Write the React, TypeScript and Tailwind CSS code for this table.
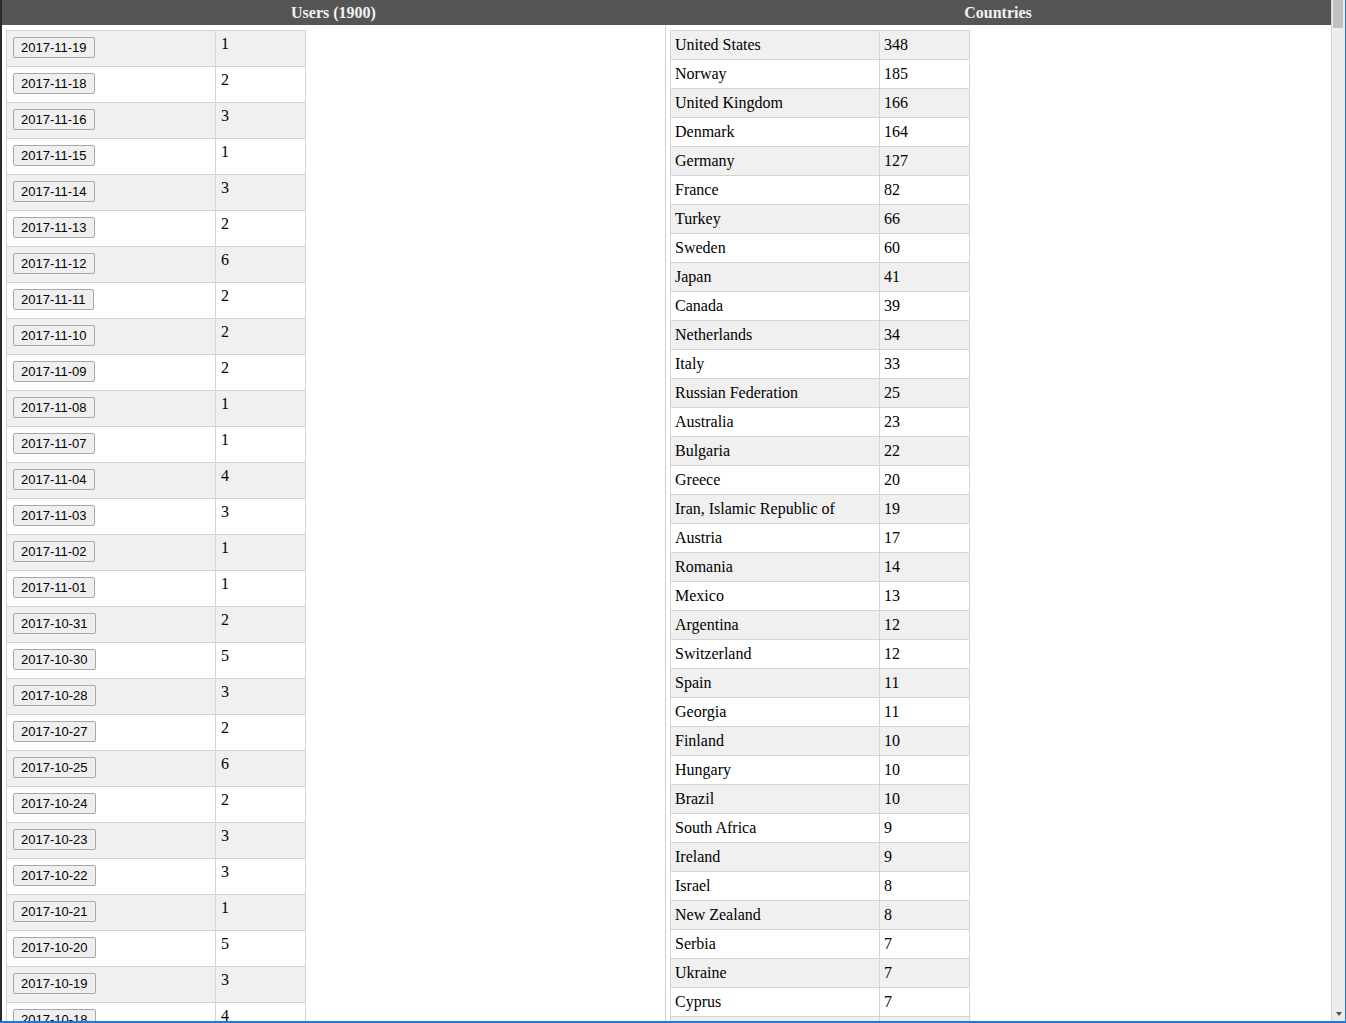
const visits: [string, number][] = [
  ['2017-11-19', 1],
  ['2017-11-18', 2],
  ['2017-11-16', 3],
  ['2017-11-15', 1],
  ['2017-11-14', 3],
  ['2017-11-13', 2],
  ['2017-11-12', 6],
  ['2017-11-11', 2],
  ['2017-11-10', 2],
  ['2017-11-09', 2],
  ['2017-11-08', 1],
  ['2017-11-07', 1],
  ['2017-11-04', 4],
  ['2017-11-03', 3],
  ['2017-11-02', 1],
  ['2017-11-01', 1],
  ['2017-10-31', 2],
  ['2017-10-30', 5],
  ['2017-10-28', 3],
  ['2017-10-27', 2],
  ['2017-10-25', 6],
  ['2017-10-24', 2],
  ['2017-10-23', 3],
  ['2017-10-22', 3],
  ['2017-10-21', 1],
  ['2017-10-20', 5],
  ['2017-10-19', 3],
  ['2017-10-18', 4],
];

const countries: [string, number][] = [
  ['United States', 348],
  ['Norway', 185],
  ['United Kingdom', 166],
  ['Denmark', 164],
  ['Germany', 127],
  ['France', 82],
  ['Turkey', 66],
  ['Sweden', 60],
  ['Japan', 41],
  ['Canada', 39],
  ['Netherlands', 34],
  ['Italy', 33],
  ['Russian Federation', 25],
  ['Australia', 23],
  ['Bulgaria', 22],
  ['Greece', 20],
  ['Iran, Islamic Republic of', 19],
  ['Austria', 17],
  ['Romania', 14],
  ['Mexico', 13],
  ['Argentina', 12],
  ['Switzerland', 12],
  ['Spain', 11],
  ['Georgia', 11],
  ['Finland', 10],
  ['Hungary', 10],
  ['Brazil', 10],
  ['South Africa', 9],
  ['Ireland', 9],
  ['Israel', 8],
  ['New Zealand', 8],
  ['Serbia', 7],
  ['Ukraine', 7],
  ['Cyprus', 7],
  ['Portugal', 6],
];

export default function App() {
  return (
    <div className="w-[1346px] h-[1023px] flex flex-col overflow-hidden bg-white font-['Liberation_Serif',serif] text-[16px] text-black">
      <div className="flex flex-1 min-h-0">
        {/* page */}
        <div className="w-[1331px] flex flex-col border-l-2 border-[#2a2a2a]">
          <div className="flex h-[25px] bg-[#555555] text-[#f2f2f2] font-bold leading-[25px]">
            <div className="w-[663px] text-center">Users (1900)</div>
            <div className="flex-1 text-center">Countries</div>
          </div>

          <div className="flex flex-1 min-h-0 overflow-hidden">
            <div className="w-[663px] pl-[4px] pt-[5px]">
              <table className="border-collapse table-fixed w-[299px]">
                <tbody>
                  {visits.map(([date, count], i) => (
                    <tr key={date} className={i % 2 === 0 ? 'bg-[#f0f0f0]' : 'bg-white'}>
                      <td className="w-[209px] border border-[#d4d4d4] align-top pl-[6px] pt-[6px] pb-[8px]">
                        <button className="block h-[21px] px-[7px] border border-[#a8a8a8] rounded-[2px] bg-[#efefef] font-['Liberation_Sans',sans-serif] text-[13px] leading-[19px] text-black">
                          {date}
                        </button>
                      </td>
                      <td className="w-[90px] border border-[#d4d4d4] align-top px-[5px] pt-[4px] leading-[18px]">
                        {count}
                      </td>
                    </tr>
                  ))}
                </tbody>
              </table>
            </div>

            <div className="flex-1 border-l border-[#cfcfcf] pl-[4px] pt-[5px]">
              <table className="border-collapse table-fixed w-[299px]">
                <tbody>
                  {countries.map(([name, count], i) => (
                    <tr key={name} className={i % 2 === 0 ? 'bg-[#f0f0f0]' : 'bg-white'}>
                      <td className="w-[209px] border border-[#d4d4d4] pl-[4px] pr-[5px] py-[5px] leading-[18px] whitespace-nowrap">
                        {name}
                      </td>
                      <td className="w-[90px] border border-[#d4d4d4] pl-[4px] pr-[5px] py-[5px] leading-[18px]">
                        {count}
                      </td>
                    </tr>
                  ))}
                </tbody>
              </table>
            </div>
          </div>
        </div>

        {/* scrollbar */}
        <div className="w-[15px] flex bg-[#1f7bd6] pr-px">
          <div className="flex-1 flex flex-col justify-between bg-[#ececec] border-l border-[#d2d2d2] pb-[5px]">
            <div className="ml-[1px] mr-[2px] h-[28px] bg-[#c1c1c1]" />
            <div className="mx-auto w-0 h-0 border-l-[3px] border-r-[3px] border-t-[4px] border-l-transparent border-r-transparent border-t-[#505050]" />
          </div>
        </div>
      </div>
      <div className="h-[2px] bg-[#1f7bd6]" />
    </div>
  );
}
